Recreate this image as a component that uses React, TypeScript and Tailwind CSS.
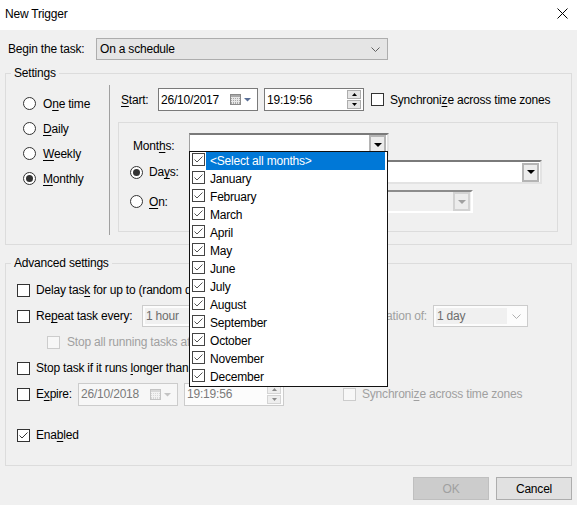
import React from "react";

const MONTHS = [
  "January",
  "February",
  "March",
  "April",
  "May",
  "June",
  "July",
  "August",
  "September",
  "October",
  "November",
  "December",
];

function U({ children }: { children: React.ReactNode }) {
  return <span className="underline underline-offset-2">{children}</span>;
}

function CheckMark({ color = "#333333" }: { color?: string }) {
  return (
    <svg width="11" height="11" viewBox="0 0 11 11" fill="none">
      <path d="M1.5 5.5L4 8L9.5 2.5" stroke={color} strokeWidth="1" />
    </svg>
  );
}

function Checkbox({ checked = false, disabled = false }: { checked?: boolean; disabled?: boolean }) {
  return (
    <span
      className={`w-[13px] h-[13px] shrink-0 border flex items-center justify-center ${
        disabled ? "border-[#cccccc] bg-[#f7f7f7]" : "border-[#333333] bg-white"
      }`}
    >
      {checked && <CheckMark />}
    </span>
  );
}

function Radio({ checked = false }: { checked?: boolean }) {
  return (
    <span className="w-[13px] h-[13px] shrink-0 rounded-full border border-[#333333] bg-white flex items-center justify-center">
      {checked && <span className="w-[7px] h-[7px] rounded-full bg-[#333333]" />}
    </span>
  );
}

function Chevron({ color = "#606060" }: { color?: string }) {
  return (
    <svg width="9" height="5" viewBox="0 0 9 5" fill="none">
      <path d="M0.5 0.5L4.5 4.5L8.5 0.5" stroke={color} strokeWidth="1" />
    </svg>
  );
}

function ClassicArrow({ disabled = false }: { disabled?: boolean }) {
  return (
    <span
      className={`w-[17px] h-[19px] shrink-0 border-2 bg-[#ececec] flex items-center justify-center ${
        disabled ? "border-[#d2d2d2]" : "border-[#b4b4b4]"
      }`}
    >
      <svg width="8" height="4" viewBox="0 0 8 4">
        <path d="M0 0H8L4 4Z" fill={disabled ? "#a0a0a0" : "#000000"} />
      </svg>
    </span>
  );
}

function CalendarIcon({ disabled = false }: { disabled?: boolean }) {
  return (
    <svg width="22" height="11" viewBox="0 0 22 11" fill="none">
      <rect x="0.5" y="0.5" width="10" height="10" fill={disabled ? "#d8d8d8" : "#a9a9a9"} stroke={disabled ? "#c4c4c4" : "#8a8a8a"} />
      <path
        d="M1 3.5H10M1 5.5H10M1 7.5H10M2.5 3V10M4.5 3V10M6.5 3V10M8.5 3V10"
        stroke={disabled ? "#f2f2f2" : "#e8e8e8"}
      />
      <path d="M14 4H21L17.5 7.5Z" fill={disabled ? "#c4c4c4" : "#5a6f96"} />
    </svg>
  );
}

function DateBox({ value, disabled = false }: { value: string; disabled?: boolean }) {
  return (
    <div
      className={`w-[100px] h-[23px] shrink-0 border flex items-center pl-[2px] pr-[5px] ${
        disabled ? "border-[#cccccc] bg-[#f7f7f7] text-[#7a7a7a]" : "border-[#7a7a7a] bg-white"
      }`}
    >
      <span className="flex-1">{value}</span>
      <CalendarIcon disabled={disabled} />
    </div>
  );
}

function SpinBox({ value, disabled = false }: { value: string; disabled?: boolean }) {
  const fill = disabled ? "#8a8a8a" : "#000000";
  const btn = `w-[14px] h-[9px] border flex items-center justify-center ${
    disabled ? "border-[#d4d4d4] bg-[#eeeeee]" : "border-[#adadad] bg-[#e5e5e5]"
  }`;
  return (
    <div
      className={`w-[100px] h-[23px] shrink-0 border flex items-center pl-[2px] pr-[2px] ${
        disabled ? "border-[#cccccc] bg-[#fcfcfc] text-[#7a7a7a]" : "border-[#7a7a7a] bg-white"
      }`}
    >
      <span className="flex-1">{value}</span>
      <div className="flex flex-col gap-[1px]">
        <span className={btn}>
          <svg width="5" height="3" viewBox="0 0 5 3">
            <path d="M0 3H5L2.5 0Z" fill={fill} />
          </svg>
        </span>
        <span className={btn}>
          <svg width="5" height="3" viewBox="0 0 5 3">
            <path d="M0 0H5L2.5 3Z" fill={fill} />
          </svg>
        </span>
      </div>
    </div>
  );
}

function DisabledCombo({ value, className }: { value: string; className: string }) {
  return (
    <div className={`h-[22px] shrink-0 border border-[#cccccc] bg-[#fcfcfc] flex items-center p-[2px] ${className}`}>
      <span className="flex-1 h-full bg-[#f0f0f0] text-[#6d6d6d] pl-[1px] flex items-center">{value}</span>
      <span className="w-[18px] flex justify-center">
        <Chevron color="#b0b0b0" />
      </span>
    </div>
  );
}

// the open "Months" list lies over the settings below it
function MonthsList() {
  return (
    <div className="absolute left-0 top-[18px] z-10 w-[199px] border border-[#111111] bg-white">
      {["<Select all months>", ...MONTHS].map((m, i) => (
        <div key={m} className="h-[18px] flex items-start pl-[2px]">
          <span className="pt-[1px]">
            <span className="w-[13px] h-[13px] border border-[#444444] bg-white flex items-center justify-center">
              <CheckMark color="#555555" />
            </span>
          </span>
          <span
            className={`ml-[1px] mr-[2px] flex-1 h-[18px] flex items-center pl-[4px] ${
              i === 0 ? "bg-[#0078d7] text-white" : ""
            }`}
          >
            {m}
          </span>
        </div>
      ))}
    </div>
  );
}

export default function App() {
  return (
    <div className="w-[577px] h-[505px] overflow-hidden bg-[#f0f0f0] text-black text-[12px] leading-[16px] tracking-[-0.2px] font-['Liberation_Sans',Arial,sans-serif]">
      {/* title bar */}
      <div className="h-[30px] bg-white flex items-center justify-between pl-[5px] pr-[9px]">
        <span className="-mt-[3px]">New Trigger</span>
        <svg className="-mt-[4px]" width="11" height="11" viewBox="0 0 11 11" fill="none">
          <path d="M0.5 0.5L10.5 10.5M10.5 0.5L0.5 10.5" stroke="#000" strokeWidth="1" />
        </svg>
      </div>

      <div className="px-[5px] pt-[8px]">
        {/* begin the task */}
        <div className="flex items-center h-[22px]">
          <span className="ml-[3px] w-[88px]">Begin the task:</span>
          <div className="w-[292px] h-[22px] border border-[#adadad] bg-[#e5e5e5] flex items-center justify-between pl-[3px] pr-[7px]">
            <span>On a schedule</span>
            <Chevron />
          </div>
        </div>

        {/* settings */}
        <fieldset className="mt-[5px] h-[180px] border border-[#dcdcdc]">
          <legend className="ml-[5px] px-[3px] leading-[16px]">Settings</legend>
          <div className="flex h-[162px]">
            <div className="w-[103px] pl-[17px] pt-[10px]">
              {[
                [<>O<U>n</U>e time</>, false],
                [<><U>D</U>aily</>, false],
                [<><U>W</U>eekly</>, false],
                [<><U>M</U>onthly</>, true],
              ].map(([label, on], i) => (
                <div key={i} className="h-[25px] flex items-center gap-[7px]">
                  <Radio checked={on as boolean} />
                  <span>{label as React.ReactNode}</span>
                </div>
              ))}
            </div>
            <div className="mt-[4px] w-px h-[150px] bg-[#a0a0a0]" />
            <div className="flex-1">
              <div className="mt-[7px] pl-[11px] h-[23px] flex items-center">
                <span className="w-[37px]">
                  <U>S</U>tart:
                </span>
                <DateBox value="26/10/2017" />
                <span className="ml-[6px]">
                  <SpinBox value="19:19:56" />
                </span>
                <span className="ml-[7px]">
                  <Checkbox />
                </span>
                <span className="ml-[6px]">
                  Synchroni<U>z</U>e across time zones
                </span>
              </div>

              <div className="mt-[11px] ml-[8px] w-[440px] h-[110px] border border-[#dcdcdc]">
                <div className="pt-[10px] pl-[14px] h-[23px] box-content flex items-center">
                  <span className="w-[56px] pt-[2px]">
                    Mont<U>h</U>s:
                  </span>
                  <div className="relative">
                    <div className="w-[200px] h-[23px] border-t-2 border-t-[#7a7a7a] border-l border-l-[#a0a0a0] border-r-2 border-r-[#e3e3e3] border-b-2 border-b-[#e3e3e3] bg-white flex items-center justify-end pr-[1px]">
                      <ClassicArrow />
                    </div>
                    <MonthsList />
                  </div>
                </div>

                <div className="mt-[4px] pl-[11px] h-[24px] flex items-center">
                  <Radio checked />
                  <span className="ml-[6px] w-[40px]">
                    Da<U>y</U>s:
                  </span>
                  <div className="w-[353px] h-[24px] border-t-2 border-t-[#7a7a7a] border-l border-l-[#a0a0a0] border-r-2 border-r-[#e3e3e3] border-b-2 border-b-[#e3e3e3] bg-white flex items-center justify-end pr-[1px]">
                    <ClassicArrow />
                  </div>
                </div>

                <div className="mt-[6px] pl-[11px] h-[23px] flex items-center">
                  <Radio />
                  <span className="ml-[6px] w-[40px]">
                    <U>O</U>n:
                  </span>
                  <div className="w-[284px] h-[23px] border-t-2 border-t-[#8c8c8c] border-l border-l-[#b4b4b4] border-r-2 border-r-[#ffffff] border-b-2 border-b-[#ffffff] bg-[#f0f0f0] flex items-center justify-end pr-[1px]">
                    <ClassicArrow disabled />
                  </div>
                </div>
              </div>
            </div>
          </div>
        </fieldset>

        {/* advanced settings: the parts under the open list are cut off at its left edge */}
        <fieldset className="mt-[10px] h-[211px] border border-[#dcdcdc]">
          <legend className="ml-[5px] px-[3px] leading-[16px]">Advanced settings</legend>
          <div className="pl-[11px] pt-[6px]">
            <div className="h-[26px] flex items-center">
              <Checkbox />
              <span className="ml-[6px] w-[153px] overflow-hidden whitespace-nowrap">
                Delay tas<U>k</U> for up to (random delay):
              </span>
            </div>

            <div className="h-[26px] flex items-center">
              <Checkbox />
              <span className="ml-[6px] w-[106px]">
                Re<U>p</U>eat task every:
              </span>
              <div className="w-[47px] overflow-hidden">
                <DisabledCombo value="1 hour" className="w-[100px]" />
              </div>
              <span className="ml-[199px] w-[39px] overflow-hidden whitespace-nowrap flex justify-end text-[#a0a0a0]">
                <span className="shrink-0">for a duration of:</span>
              </span>
              <span className="ml-[6px]">
                <DisabledCombo value="1 day" className="w-[95px]" />
              </span>
            </div>

            <div className="h-[26px] flex items-center pl-[30px]">
              <Checkbox disabled />
              <span className="ml-[7px] w-[122px] overflow-hidden whitespace-nowrap text-[#a0a0a0]">
                Stop all running tasks at end of repetition duration
              </span>
            </div>

            <div className="h-[26px] flex items-center">
              <Checkbox />
              <span className="ml-[6px] w-[153px] overflow-hidden whitespace-nowrap">
                Stop task if it runs <U>l</U>onger than:
              </span>
            </div>

            <div className="h-[26px] flex items-center">
              <Checkbox />
              <span className="ml-[6px] w-[42px]">
                E<U>x</U>pire:
              </span>
              <DateBox value="26/10/2018" disabled />
              <span className="ml-[6px]">
                <SpinBox value="19:19:56" disabled />
              </span>
              <span className="ml-[59px]">
                <Checkbox disabled />
              </span>
              <span className="ml-[6px] text-[#a0a0a0]">
                Synchroni<U>z</U>e across time zones
              </span>
            </div>

            <div className="mt-[15px] h-[26px] flex items-center">
              <Checkbox checked />
              <span className="ml-[6px]">
                Ena<U>b</U>led
              </span>
            </div>
          </div>
        </fieldset>

        {/* buttons */}
        <div className="mt-[11px] flex justify-end gap-[7px]">
          <button className="w-[76px] h-[23px] border border-[#bfbfbf] bg-[#cccccc] text-[#a0a0a0]">OK</button>
          <button className="w-[76px] h-[23px] border border-[#adadad] bg-[#e1e1e1]">Cancel</button>
        </div>
      </div>
    </div>
  );
}
